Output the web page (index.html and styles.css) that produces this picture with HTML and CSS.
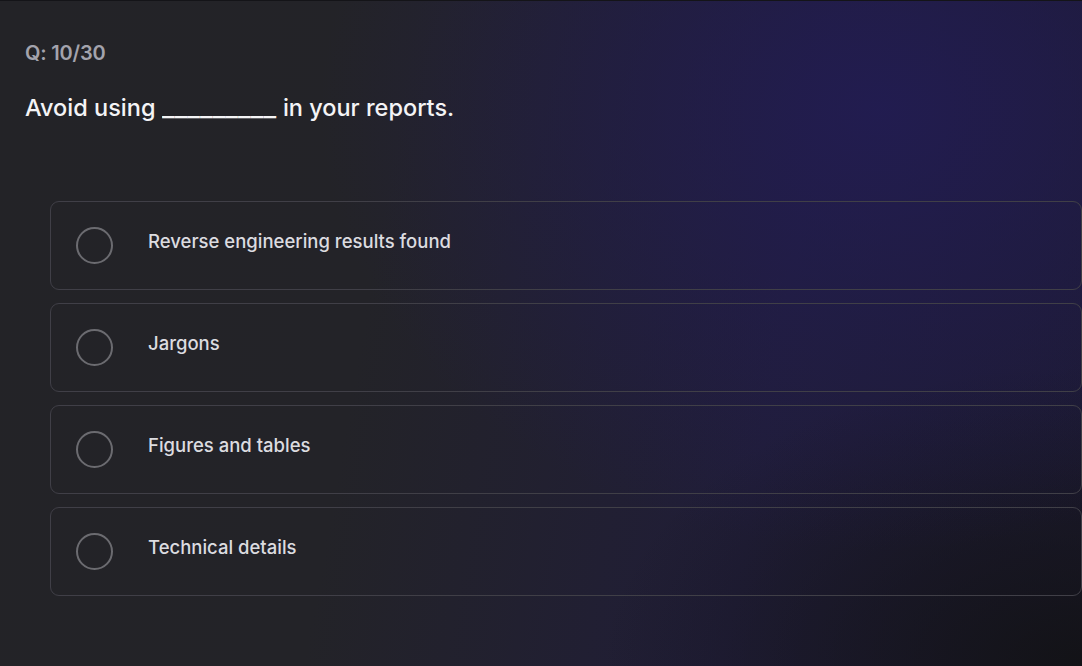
FILE: index.html
```html
<!DOCTYPE html>
<html lang="en">
<head>
<meta charset="utf-8">
<title>Quiz</title>
<link rel="stylesheet" href="styles.css">
</head>
<body>
<main class="quiz">
  <div class="counter">Q: 10/30</div>
  <h1 class="question">Avoid using <span class="blank">_________</span> in your reports.</h1>
  <ul class="options">
    <li class="option"><span class="radio"></span><span class="label">Reverse engineering results found</span></li>
    <li class="option"><span class="radio"></span><span class="label">Jargons</span></li>
    <li class="option"><span class="radio"></span><span class="label">Figures and tables</span></li>
    <li class="option"><span class="radio"></span><span class="label">Technical details</span></li>
  </ul>
</main>
</body>
</html>
```
FILE: styles.css
```css
html, body {
  margin: 0;
  padding: 0;
  height: 100%;
}
body {
  font-family: "Inter", "Noto Sans", sans-serif;
  background:
    radial-gradient(ellipse 560px 440px at 880px 110px, rgba(34, 28, 84, 0.85), rgba(34, 28, 82, 0) 100%),
    radial-gradient(ellipse 480px 300px at 1082px 666px, rgba(18, 18, 20, 0.9), rgba(18, 18, 20, 0) 100%),
    linear-gradient(100deg, #232327 0%, #232328 35%, #201d38 70%, #1c1a30 100%);
  border-top: 1px solid #141418;
  box-sizing: border-box;
  overflow: hidden;
}
.quiz {
  padding: 40px 0 0 25px;
}
.counter {
  font-size: 20px;
  font-weight: 600;
  color: #a3a3ad;
  line-height: 24px;
  letter-spacing: -0.2px;
}
.question {
  margin: 28px 0 0 0;
  font-size: 23.5px;
  font-weight: 500;
  color: #f4f4f6;
  line-height: 30px;
}
.blank {
  display: inline-block;
  transform: scaleX(1.165);
  transform-origin: left center;
  margin-right: 17px;
}
.options {
  list-style: none;
  margin: 78px 0 0 25px;
  padding: 0;
  display: flex;
  flex-direction: column;
  gap: 13px;
}
.option {
  box-sizing: border-box;
  height: 89px;
  width: 1032px;
  border: 1px solid #403f47;
  border-radius: 9px;
  display: flex;
  align-items: center;
  padding-left: 25px;
}
.radio {
  box-sizing: border-box;
  width: 37px;
  height: 37px;
  border: 2.5px solid #6b6b70;
  border-radius: 50%;
  flex: none;
}
.label {
  margin-left: 35px;
  margin-bottom: 10px;
  font-size: 18.5px;
  font-weight: 500;
  color: #dcdce0;
}
```
